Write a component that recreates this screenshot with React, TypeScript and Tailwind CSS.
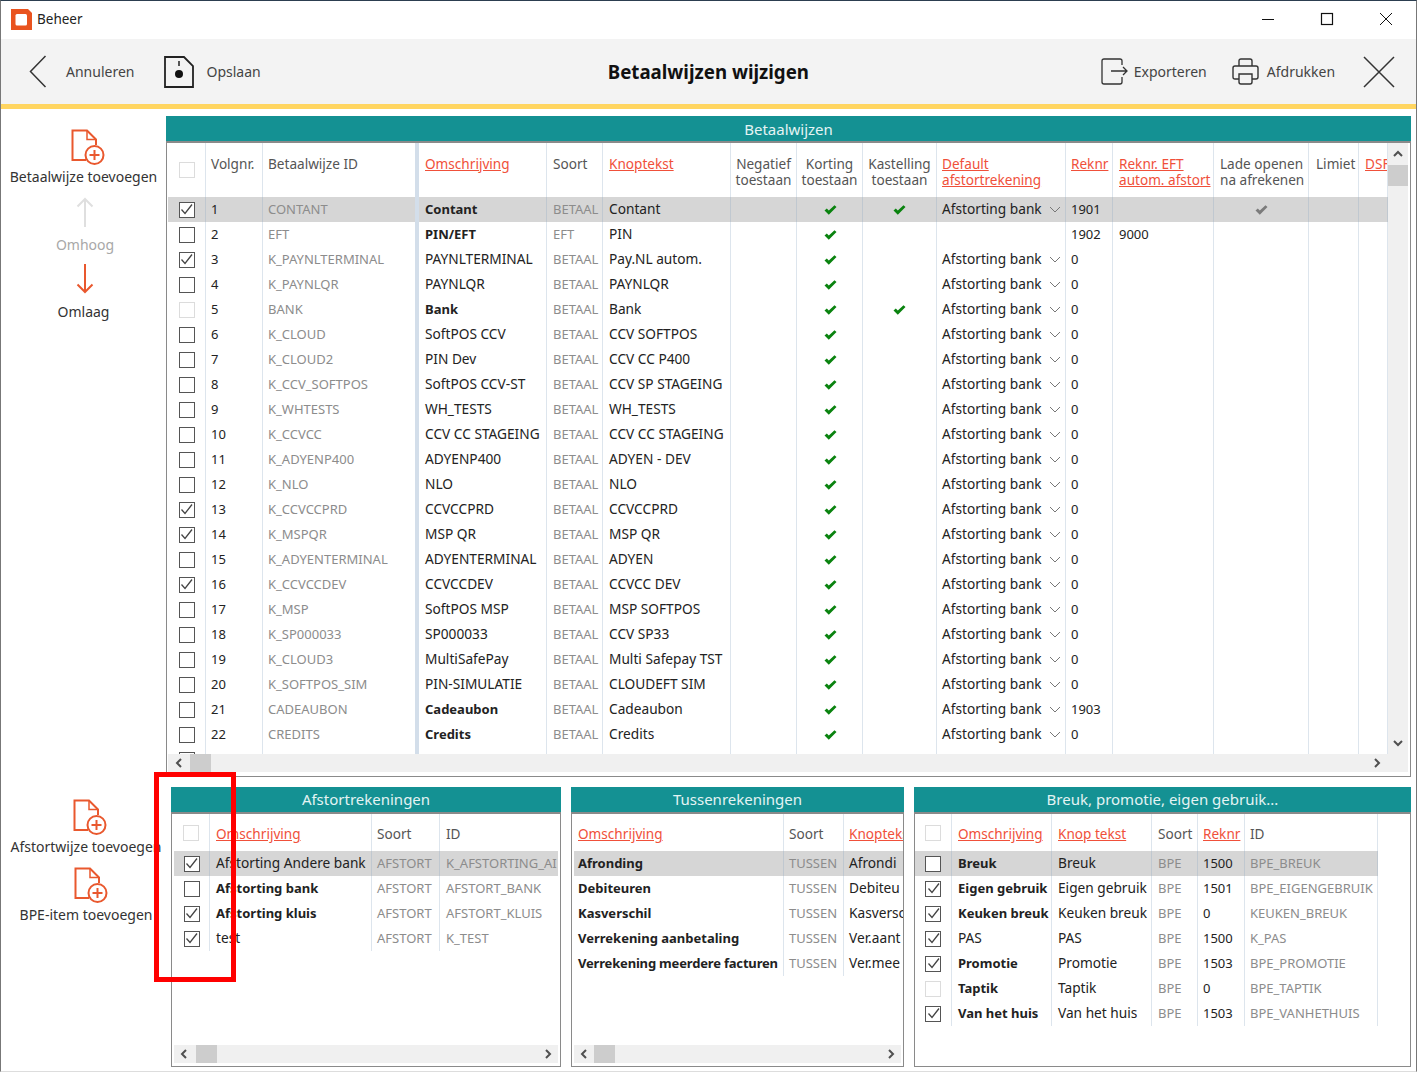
import React from 'react';

const cell = 'flex items-center overflow-hidden whitespace-nowrap border-r border-[#8fa8c4]/30 px-[5px]';
const headCell = 'overflow-hidden whitespace-nowrap border-r border-[#8fa8c4]/30 px-[5px] pt-[13px] text-[13.6px] leading-[16px] text-[#555]';
const linkText = 'text-[#f0503a] underline';
const mutedText = 'text-[13px] text-[#8c8c8c]';
const boldText = 'text-[13px] font-bold';
const numText = 'text-[13px]';

type CheckState = 'on' | 'off' | 'disabled';

const Checkbox: React.FC<{ state: CheckState }> = ({ state }) => (
  <div
    className={
      state === 'disabled'
        ? 'size-4 shrink-0 border border-[#dcdcdc] bg-white'
        : 'flex size-4 shrink-0 items-center justify-center border-[1.5px] border-[#555] bg-white'
    }
  >
    {state === 'on' && (
      <svg width="13" height="13" viewBox="0 0 13 13" fill="none">
        <path d="M1.5 6.5 L5 10.5 L12 1.5" stroke="#444" strokeWidth="1.3" />
      </svg>
    )}
  </div>
);

const GreenCheck: React.FC<{ gray?: boolean }> = ({ gray }) => (
  <svg width="13" height="10" viewBox="0 0 13 10">
    <path
      d="M0.5 5.5 L2.8 3.6 L4.8 5.6 L10.5 0.3 L12.5 2 L4.8 9.7 Z"
      fill={gray ? '#7b7b7b' : '#0a830f'}
    />
  </svg>
);

const Chevron: React.FC = () => (
  <svg width="12" height="7" viewBox="0 0 12 7" fill="none" className="ml-auto shrink-0">
    <path d="M1 1 L6 6 L11 1" stroke="#777" strokeWidth="1" />
  </svg>
);

const ScrollArrow: React.FC<{ dir: 'up' | 'down' | 'left' | 'right' }> = ({ dir }) => {
  const d = {
    up: 'M1 6 L5 2 L9 6',
    down: 'M1 2 L5 6 L9 2',
    left: 'M6 1 L2 5 L6 9',
    right: 'M2 1 L6 5 L2 9',
  }[dir];
  return (
    <svg width={dir === 'up' || dir === 'down' ? 10 : 8} height={dir === 'up' || dir === 'down' ? 8 : 10} fill="none">
      <path d={d} stroke="#505050" strokeWidth="2" />
    </svg>
  );
};

const DocPlus: React.FC = () => (
  <svg width="34" height="37" viewBox="0 0 34 37" fill="none" stroke="#e9582e" strokeWidth="2" className="ml-[9px]">
    <path d="M15 31 H1.5 V1.5 H16 L25 10.5 V16" />
    <path d="M16 2 V10.5 H24.5" strokeWidth="1.5" />
    <circle cx="23.5" cy="26" r="9" />
    <path d="M23.5 21 V31 M18.5 26 H28.5" />
  </svg>
);

const SideButton: React.FC<{ label: string; className?: string }> = ({ label, className }) => (
  <div className={`flex flex-col items-center ${className ?? ''}`}>
    <DocPlus />
    <span className="mt-px whitespace-nowrap text-[14px] leading-[20px] text-[#333]">{label}</span>
  </div>
);

const PanelHeader: React.FC<{ title: string; className?: string }> = ({ title, className }) => (
  <div className={`flex h-[25px] shrink-0 items-center justify-center bg-[#149193] text-[15px] text-[#e4f4f4] ${className ?? ''}`}>
    {title}
  </div>
);

type MainRow = {
  n: number;
  check: CheckState;
  id: string;
  name: string;
  bold?: boolean;
  soort?: string;
  knop: string;
  kast?: boolean;
  reknr: string;
  noBank?: boolean;
  eft?: string;
  lade?: boolean;
};

const mainRows: MainRow[] = [
  { n: 1, check: 'on', id: 'CONTANT', name: 'Contant', bold: true, knop: 'Contant', kast: true, reknr: '1901', lade: true },
  { n: 2, check: 'off', id: 'EFT', name: 'PIN/EFT', bold: true, soort: 'EFT', knop: 'PIN', reknr: '1902', noBank: true, eft: '9000' },
  { n: 3, check: 'on', id: 'K_PAYNLTERMINAL', name: 'PAYNLTERMINAL', knop: 'Pay.NL autom.', reknr: '0' },
  { n: 4, check: 'off', id: 'K_PAYNLQR', name: 'PAYNLQR', knop: 'PAYNLQR', reknr: '0' },
  { n: 5, check: 'disabled', id: 'BANK', name: 'Bank', bold: true, knop: 'Bank', kast: true, reknr: '0' },
  { n: 6, check: 'off', id: 'K_CLOUD', name: 'SoftPOS CCV', knop: 'CCV SOFTPOS', reknr: '0' },
  { n: 7, check: 'off', id: 'K_CLOUD2', name: 'PIN Dev', knop: 'CCV CC P400', reknr: '0' },
  { n: 8, check: 'off', id: 'K_CCV_SOFTPOS', name: 'SoftPOS CCV-ST', knop: 'CCV SP STAGEING', reknr: '0' },
  { n: 9, check: 'off', id: 'K_WHTESTS', name: 'WH_TESTS', knop: 'WH_TESTS', reknr: '0' },
  { n: 10, check: 'off', id: 'K_CCVCC', name: 'CCV CC STAGEING', knop: 'CCV CC STAGEING', reknr: '0' },
  { n: 11, check: 'off', id: 'K_ADYENP400', name: 'ADYENP400', knop: 'ADYEN - DEV', reknr: '0' },
  { n: 12, check: 'off', id: 'K_NLO', name: 'NLO', knop: 'NLO', reknr: '0' },
  { n: 13, check: 'on', id: 'K_CCVCCPRD', name: 'CCVCCPRD', knop: 'CCVCCPRD', reknr: '0' },
  { n: 14, check: 'on', id: 'K_MSPQR', name: 'MSP QR', knop: 'MSP QR', reknr: '0' },
  { n: 15, check: 'off', id: 'K_ADYENTERMINAL', name: 'ADYENTERMINAL', knop: 'ADYEN', reknr: '0' },
  { n: 16, check: 'on', id: 'K_CCVCCDEV', name: 'CCVCCDEV', knop: 'CCVCC DEV', reknr: '0' },
  { n: 17, check: 'off', id: 'K_MSP', name: 'SoftPOS MSP', knop: 'MSP SOFTPOS', reknr: '0' },
  { n: 18, check: 'off', id: 'K_SP000033', name: 'SP000033', knop: 'CCV SP33', reknr: '0' },
  { n: 19, check: 'off', id: 'K_CLOUD3', name: 'MultiSafePay', knop: 'Multi Safepay TST', reknr: '0' },
  { n: 20, check: 'off', id: 'K_SOFTPOS_SIM', name: 'PIN-SIMULATIE', knop: 'CLOUDEFT SIM', reknr: '0' },
  { n: 21, check: 'off', id: 'CADEAUBON', name: 'Cadeaubon', bold: true, knop: 'Cadeaubon', reknr: '1903' },
  { n: 22, check: 'off', id: 'CREDITS', name: 'Credits', bold: true, knop: 'Credits', reknr: '0' },
];

const mainGrid =
  'grid grid-cols-[38px_57px_156px_128px_56px_128px_66px_66px_74px_129px_47px_101px_95px_50px_29px]';
const idCell = 'border-r-4 border-r-[#d3deea]';

const MainTable: React.FC = () => (
  <div className="h-[611px] w-[1220px] shrink-0 overflow-hidden">
    <div className={`${mainGrid} h-[54px]`}>
      <div className="flex justify-center border-r border-[#8fa8c4]/30 pt-[19px]">
        <Checkbox state="disabled" />
      </div>
      <div className={headCell}>Volgnr.</div>
      <div className={`${headCell} ${idCell}`}>Betaalwijze ID</div>
      <div className={`${headCell} pl-[6px]`}><span className={linkText}>Omschrijving</span></div>
      <div className={`${headCell} pl-[6px]`}>Soort</div>
      <div className={`${headCell} pl-[6px]`}><span className={linkText}>Knoptekst</span></div>
      <div className={`${headCell} !px-0 text-center`}>Negatief<br />toestaan</div>
      <div className={`${headCell} !px-0 text-center`}>Korting<br />toestaan</div>
      <div className={`${headCell} !px-0 text-center`}>Kastelling<br />toestaan</div>
      <div className={headCell}><span className={linkText}>Default<br />afstortrekening</span></div>
      <div className={headCell}><span className={linkText}>Reknr</span></div>
      <div className={`${headCell} pl-[6px]`}><span className={linkText}>Reknr. EFT<br />autom. afstort</span></div>
      <div className={`${headCell} pl-[6px]`}>Lade openen<br />na afrekenen</div>
      <div className={`${headCell} pl-[7px]`}>Limiet</div>
      <div className={`${headCell} pl-[6px]`}><span className={linkText}>DSF</span></div>
    </div>
    {mainRows.map((r) => (
      <div key={r.n} className={`${mainGrid} h-[25px] ${r.n === 1 ? 'bg-[#d6d6d6]' : ''}`}>
        <div className={`${cell} justify-center`}><Checkbox state={r.check} /></div>
        <div className={`${cell} ${numText}`}>{r.n}</div>
        <div className={`${cell} ${idCell} ${mutedText}`}>{r.id}</div>
        <div className={`${cell} pl-[6px] ${r.bold ? boldText : ''}`}>{r.name}</div>
        <div className={`${cell} pl-[6px] ${mutedText}`}>{r.soort ?? 'BETAAL'}</div>
        <div className={`${cell} pl-[6px]`}>{r.knop}</div>
        <div className={cell} />
        <div className={`${cell} justify-center pl-[6px]`}><GreenCheck /></div>
        <div className={`${cell} justify-center pl-[5px]`}>{r.kast && <GreenCheck />}</div>
        <div className={`${cell} pr-[4px]`}>
          {!r.noBank && (
            <>
              Afstorting bank
              <Chevron />
            </>
          )}
        </div>
        <div className={`${cell} ${numText}`}>{r.reknr}</div>
        <div className={`${cell} pl-[6px] ${numText}`}>{r.eft}</div>
        <div className={`${cell} justify-center`}>{r.lade && <GreenCheck gray />}</div>
        <div className={cell} />
        <div className={cell} />
      </div>
    ))}
    <div className={`${mainGrid} h-[25px]`}>
      <div className={`${cell} justify-center`}><Checkbox state="off" /></div>
      <div className={cell} />
      <div className={`${cell} ${idCell}`} />
      <div className={cell} />
      <div className={cell} />
      <div className={cell} />
      <div className={cell} />
      <div className={cell} />
      <div className={cell} />
      <div className={cell} />
      <div className={cell} />
      <div className={cell} />
      <div className={cell} />
      <div className={cell} />
      <div className={cell} />
    </div>
  </div>
);

const afstortRows: [CheckState, string, boolean, string][] = [
  ['on', 'Afstorting Andere bank', false, 'K_AFSTORTING_AI'],
  ['off', 'Afstorting bank', true, 'AFSTORT_BANK'],
  ['on', 'Afstorting kluis', true, 'AFSTORT_KLUIS'],
  ['on', 'test', false, 'K_TEST'],
];

const tussenRows: [string, string][] = [
  ['Afronding', 'Afrondi'],
  ['Debiteuren', 'Debiteu'],
  ['Kasverschil', 'Kasversc'],
  ['Verrekening aanbetaling', 'Ver.aant'],
  ['Verrekening meerdere facturen', 'Ver.mee'],
];

const bpeRows: [CheckState, string, boolean, string, string, string][] = [
  ['off', 'Breuk', true, 'Breuk', '1500', 'BPE_BREUK'],
  ['on', 'Eigen gebruik', true, 'Eigen gebruik', '1501', 'BPE_EIGENGEBRUIK'],
  ['on', 'Keuken breuk', true, 'Keuken breuk', '0', 'KEUKEN_BREUK'],
  ['on', 'PAS', false, 'PAS', '1500', 'K_PAS'],
  ['on', 'Promotie', true, 'Promotie', '1503', 'BPE_PROMOTIE'],
  ['disabled', 'Taptik', true, 'Taptik', '0', 'BPE_TAPTIK'],
  ['on', 'Van het huis', true, 'Van het huis', '1503', 'BPE_VANHETHUIS'],
];

const lowerHead = 'flex items-center overflow-hidden whitespace-nowrap border-r border-[#8fa8c4]/30 px-[5px] pt-[4px] text-[13.6px] text-[#555]';

const HScroll: React.FC<{ thumb: string }> = ({ thumb }) => (
  <div className="mx-[2px] flex h-[18px] shrink-0 items-center bg-[#f0f0f0]">
    <div className="flex w-[20px] justify-center"><ScrollArrow dir="left" /></div>
    <div className={`h-full bg-[#cdcdcd] ${thumb}`} />
    <div className="ml-auto flex w-[20px] justify-center"><ScrollArrow dir="right" /></div>
  </div>
);

const lowerPanel = 'flex min-w-0 flex-1 flex-col border-x border-b border-t-2 border-x-[#8a8a8a] border-b-[#8a8a8a] border-t-[#8a8a8a]';

const App: React.FC = () => {
  return (
    <div className="relative flex h-[1072px] w-[1417px] flex-col overflow-hidden border-x border-t border-b border-x-[#777] border-t-[#2c3e50] border-b-[#ddd] bg-white font-['Noto_Sans',sans-serif] text-[13.7px] text-[#222]">
      {/* title bar */}
      <div className="flex h-[38px] shrink-0 items-center pb-[2px] pl-[10px]">
        <svg width="21" height="21" viewBox="0 0 21 21">
          <path d="M0 0 H17 L21 4 V21 H0 Z" fill="#e9531f" />
          <rect x="4.5" y="5" width="11.5" height="11.5" rx="1.5" fill="#fff" />
        </svg>
        <span className="ml-[5px] text-[13.5px]">Beheer</span>
        <div className="ml-auto flex items-center">
          <svg width="14" height="14" viewBox="0 0 14 14" fill="none" stroke="#111" strokeWidth="1">
            <path d="M1 7.5 H13" />
          </svg>
          <svg width="14" height="14" viewBox="0 0 14 14" fill="none" stroke="#111" strokeWidth="1.2" className="ml-[45px]">
            <rect x="1.5" y="1.5" width="11" height="11" />
          </svg>
          <svg width="14" height="14" viewBox="0 0 14 14" fill="none" stroke="#111" strokeWidth="1" className="ml-[45px] mr-[23px]">
            <path d="M1 1 L13 13 M13 1 L1 13" />
          </svg>
        </div>
      </div>

      {/* toolbar */}
      <div className="flex h-[70px] shrink-0 items-center border-b-[5px] border-[#ffd560] bg-[#f3f3f3] text-[14px] text-[#444]">
        <svg width="18" height="33" viewBox="0 0 18 33" fill="none" stroke="#333" strokeWidth="1.5" className="ml-[28px]">
          <path d="M16.5 1 L1.5 16.5 L16.5 32" />
        </svg>
        <span className="ml-[19px]">Annuleren</span>
        <svg width="30" height="32" viewBox="0 0 30 32" fill="none" className="ml-[30px]">
          <path d="M1 1 H20 L29 10 V31 H1 Z" stroke="#222" strokeWidth="1.8" />
          <path d="M15 5 V10" stroke="#222" strokeWidth="1.5" />
          <circle cx="15" cy="18" r="4" fill="#111" />
        </svg>
        <span className="ml-[12px]">Opslaan</span>
        <span className="ml-[347px] w-[260px] pt-px text-[18.7px] font-bold text-[#111]">Betaalwijzen wijzigen</span>
        <svg width="28" height="27" viewBox="0 0 28 27" fill="none" stroke="#333" strokeWidth="1.3" className="ml-[233px]">
          <path d="M21 7 V3 Q21 1 19 1 H3 Q1 1 1 3 V24 Q1 26 3 26 H19 Q21 26 21 24 V19" />
          <path d="M10 13 H26 M22 9 L26 13 L22 17" />
        </svg>
        <span className="ml-[5px]">Exporteren</span>
        <svg width="27" height="27" viewBox="0 0 27 27" fill="none" stroke="#333" strokeWidth="1.4" className="ml-[25px]">
          <path d="M7 8 V3 Q7 1 9 1 H18 Q20 1 20 3 V8" />
          <path d="M7 21 H3 Q1 21 1 19 V10 Q1 8 3 8 H24 Q26 8 26 10 V19 Q26 21 24 21 H20" />
          <path d="M7 16 H20 V24 Q20 26 18 26 H9 Q7 26 7 24 Z" />
        </svg>
        <span className="ml-[8px]">Afdrukken</span>
        <svg width="32" height="32" viewBox="0 0 32 32" fill="none" stroke="#333" strokeWidth="1.5" className="ml-[28px]">
          <path d="M1 1 L31 31 M31 1 L1 31" />
        </svg>
      </div>

      {/* upper part */}
      <div className="mt-[7px] flex h-[661px] shrink-0">
        <div className="flex w-[165px] shrink-0 flex-col items-center pt-[13px] text-[14px]">
          <SideButton label="Betaalwijze toevoegen" />
          <svg width="18" height="31" viewBox="0 0 18 31" fill="none" stroke="#dfdfdf" strokeWidth="2" className="ml-[3px] mt-[10px]">
            <path d="M9 30 V2 M1.5 9.5 L9 2 L16.5 9.5" />
          </svg>
          <span className="ml-[3px] mt-[7px] leading-[20px] text-[#a8a8a8]">Omhoog</span>
          <svg width="18" height="31" viewBox="0 0 18 31" fill="none" stroke="#e9582e" strokeWidth="2" className="ml-[3px] mt-[8px]">
            <path d="M9 1 V29 M1.5 21.5 L9 29 L16.5 21.5" />
          </svg>
          <span className="mt-[8px] leading-[20px] text-[#333]">Omlaag</span>
        </div>
        <div className="flex w-[1245px] shrink-0 flex-col">
          <PanelHeader title="Betaalwijzen" className="pt-[2px]" />
          <div className="flex h-[636px] flex-col border-x border-b border-t-2 border-x-[#8a8a8a] border-b-[#8a8a8a] border-t-[#8a8a8a] pl-px">
            <div className="flex">
              <MainTable />
              <div className="flex h-[611px] w-[20px] flex-col items-center bg-[#f0f0f0]">
                <div className="flex h-[22px] items-center"><ScrollArrow dir="up" /></div>
                <div className="h-[21px] w-full bg-[#cdcdcd]" />
                <div className="mt-auto flex h-[22px] items-center"><ScrollArrow dir="down" /></div>
              </div>
            </div>
            <div className="mr-[2px] flex h-[18px] shrink-0 items-center bg-[#f0f0f0]">
              <div className="flex w-[22px] justify-center"><ScrollArrow dir="left" /></div>
              <div className="h-full w-[21px] bg-[#cdcdcd]" />
              <div className="ml-auto flex w-[62px] justify-center"><ScrollArrow dir="right" /></div>
            </div>
          </div>
        </div>
      </div>

      {/* lower part */}
      <div className="mt-[10px] flex h-[280px] shrink-0">
        <div className="flex w-[170px] shrink-0 flex-col items-center pt-[12px]">
          <SideButton label="Afstortwijze toevoegen" />
          <SideButton label="BPE-item toevoegen" className="mt-[10px]" />
        </div>

        <div className="flex w-[390px] shrink-0 flex-col">
          <PanelHeader title="Afstortrekeningen" />
          <div className={lowerPanel}>
            <div className="flex-1 overflow-hidden">
              <div className="grid h-[37px] grid-cols-[38px_162px_68px_120px]">
                <div className="flex items-center justify-center border-r border-[#8fa8c4]/30"><Checkbox state="disabled" /></div>
                <div className={`${lowerHead} pl-[6px]`}><span className={linkText}>Omschrijving</span></div>
                <div className={lowerHead}>Soort</div>
                <div className={`${lowerHead} border-r-0 pl-[6px]`}>ID</div>
              </div>
              {afstortRows.map(([check, name, bold, id], i) => (
                <div key={name} className={`mx-[2px] grid h-[25px] grid-cols-[36px_162px_68px_118px] ${i === 0 ? 'bg-[#d6d6d6]' : ''}`}>
                  <div className={`${cell} justify-center`}><Checkbox state={check} /></div>
                  <div className={`${cell} pl-[6px] ${bold ? boldText : ''}`}>{name}</div>
                  <div className={`${cell} ${mutedText} text-[13.5px]`}>AFSTORT</div>
                  <div className={`${cell} ${mutedText} border-r-0 pl-[6px] text-[13.5px]`}>{id}</div>
                </div>
              ))}
            </div>
            <HScroll thumb="ml-[2px] w-[21px]" />
            <div className="h-[3px] shrink-0" />
          </div>
        </div>

        <div className="ml-[10px] flex w-[333px] shrink-0 flex-col">
          <PanelHeader title="Tussenrekeningen" />
          <div className={lowerPanel}>
            <div className="flex-1 overflow-hidden">
              <div className="grid h-[37px] grid-cols-[212px_60px_59px]">
                <div className={`${lowerHead} pl-[6px]`}><span className={linkText}>Omschrijving</span></div>
                <div className={lowerHead}>Soort</div>
                <div className={`${lowerHead} border-r-0`}><span className={linkText}>Knoptekst</span></div>
              </div>
              {tussenRows.map(([name, knop], i) => (
                <div key={name} className={`ml-[2px] grid h-[25px] grid-cols-[210px_60px_59px] ${i === 0 ? 'bg-[#d6d6d6]' : ''}`}>
                  <div className={`${cell} pl-[4px] ${boldText} ${name.length > 24 ? 'tracking-[-0.18px]' : ''}`}>{name}</div>
                  <div className={`${cell} ${mutedText}`}>TUSSEN</div>
                  <div className={`${cell} border-r-0`}>{knop}</div>
                </div>
              ))}
            </div>
            <HScroll thumb="w-[21px]" />
            <div className="h-[3px] shrink-0" />
          </div>
        </div>

        <div className="ml-[10px] flex w-[497px] shrink-0 flex-col">
          <PanelHeader title="Breuk, promotie, eigen gebruik..." />
          <div className={lowerPanel}>
            <div className="grid h-[37px] grid-cols-[37px_100px_100px_46px_47px_133px]">
              <div className="flex items-center justify-center border-r border-[#8fa8c4]/30"><Checkbox state="disabled" /></div>
              <div className={`${lowerHead} pl-[6px]`}><span className={linkText}>Omschrijving</span></div>
              <div className={`${lowerHead} pl-[6px]`}><span className={linkText}>Knop tekst</span></div>
              <div className={`${lowerHead} pl-[6px]`}>Soort</div>
              <div className={lowerHead}><span className={linkText}>Reknr</span></div>
              <div className={lowerHead}>ID</div>
            </div>
            {bpeRows.map(([check, name, bold, knop, reknr, id], i) => (
              <div key={name} className={`grid h-[25px] w-[463px] grid-cols-[37px_100px_100px_46px_47px_133px] ${i === 0 ? 'bg-[#d6d6d6]' : ''}`}>
                <div className={`${cell} justify-center`}><Checkbox state={check} /></div>
                <div className={`${cell} pl-[6px] ${bold ? boldText : ''}`}>{name}</div>
                <div className={`${cell} pl-[6px]`}>{knop}</div>
                <div className={`${cell} pl-[6px] ${mutedText}`}>BPE</div>
                <div className={`${cell} ${numText}`}>{reknr}</div>
                <div className={`${cell} ${mutedText}`}>{id}</div>
              </div>
            ))}
          </div>
        </div>
      </div>

      {/* red annotation */}
      <div className="pointer-events-none absolute left-[153px] top-[771px] h-[210px] w-[82px] border-[5px] border-[#ff0000]" />
    </div>
  );
};

export default App;
